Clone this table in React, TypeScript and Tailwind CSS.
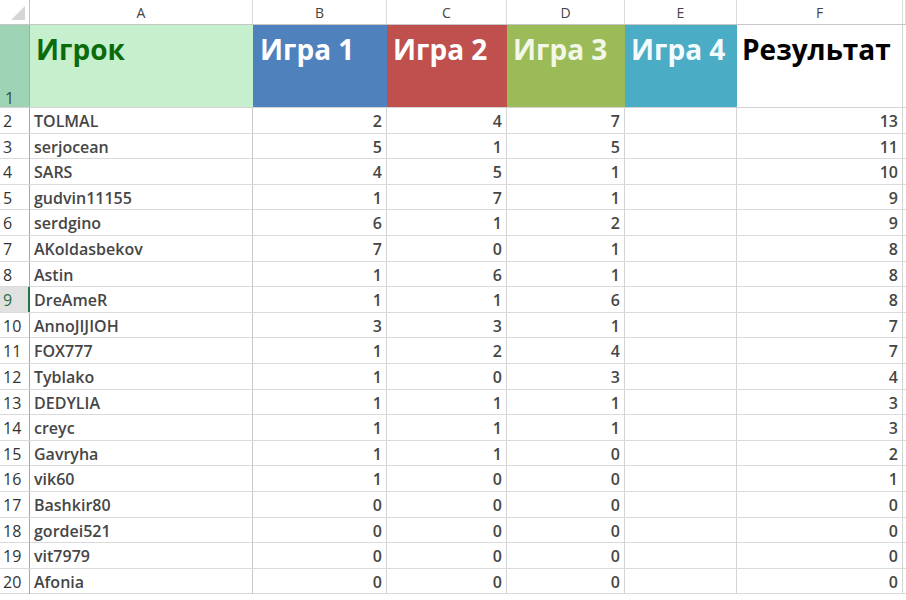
const rows: [string, number, number, number, number][] = [
  ["TOLMAL", 2, 4, 7, 13],
  ["serjocean", 5, 1, 5, 11],
  ["SARS", 4, 5, 1, 10],
  ["gudvin11155", 1, 7, 1, 9],
  ["serdgino", 6, 1, 2, 9],
  ["AKoldasbekov", 7, 0, 1, 8],
  ["Astin", 1, 6, 1, 8],
  ["DreAmeR", 1, 1, 6, 8],
  ["AnnoJIJIOH", 3, 3, 1, 7],
  ["FOX777", 1, 2, 4, 7],
  ["Tyblako", 1, 0, 3, 4],
  ["DEDYLIA", 1, 1, 1, 3],
  ["creyc", 1, 1, 1, 3],
  ["Gavryha", 1, 1, 0, 2],
  ["vik60", 1, 0, 0, 1],
  ["Bashkir80", 0, 0, 0, 0],
  ["gordei521", 0, 0, 0, 0],
  ["vit7979", 0, 0, 0, 0],
  ["Afonia", 0, 0, 0, 0],
];

const cols = "grid grid-cols-[30px_223px_134px_120px_118px_112px_166px_1fr]";
const letters = ["A", "B", "C", "D", "E", "F", ""];

export default function App() {
  return (
    <div className="w-[906px] h-[600px] overflow-hidden bg-white font-['Open_Sans',sans-serif] text-[#262626]">
      {/* column letters */}
      <div className={`${cols} h-[25px] border-b border-[#c6c6c6]`}>
        <div className="relative border-r border-[#c6c6c6]">
          <div className="absolute right-[4px] bottom-[4px] w-0 h-0 border-l-[14px] border-l-transparent border-b-[14px] border-b-[#d6d6d6]" />
        </div>
        {letters.map((l, i) => (
          <div
            key={i}
            className="flex items-center justify-center border-r border-[#dcdcdc] text-[14px] text-[#444]"
          >
            {l}
          </div>
        ))}
      </div>

      {/* header row */}
      <div className={`${cols} h-[83px] border-b border-[#d4d4d4] text-[28px] font-bold leading-none`}>
        <div className="flex items-end justify-start pl-[5px] pb-[1px] bg-[#9fd3b5] border-r border-[#a8a8a8] text-[16px] font-normal text-[#2f4f3a]">
          1
        </div>
        <div className="bg-[#c6efce] pl-[6px] pt-[10px] text-[#0b6b0b]">Игрок</div>
        <div className="bg-[#4f81bd] pl-[7px] pt-[10px] text-white">Игра 1</div>
        <div className="bg-[#c0504d] pl-[6px] pt-[10px] text-white">Игра 2</div>
        <div className="bg-[#9bbb59] pl-[6px] pt-[10px] text-[#f3f7e8]">Игра 3</div>
        <div className="bg-[#4bacc6] pl-[6px] pt-[10px] text-[#f4fbfd]">Игра 4</div>
        <div className="border-r border-[#d4d4d4] pl-[5px] pt-[10px] text-black">Результат</div>
        <div />
      </div>

      {/* data rows */}
      {rows.map((r, i) => {
        const n = i + 2;
        const active = n === 9;
        return (
          <div key={n} className={`${cols} h-[25.6px] border-b border-[#dadada] text-[16px] font-semibold text-[#464646]`}>
            <div
              className={`flex items-center pl-[3px] pt-[1px] font-normal border-r ${
                active
                  ? "bg-[#e1e1e1] text-[#217346] border-r-2 border-r-[#217346]"
                  : "text-[#333] border-[#a8a8a8]"
              }`}
            >
              {n}
            </div>
            <div className="flex items-center pl-[4px] pt-[1px] border-r border-[#c8c8c8]">{r[0]}</div>
            <div className="flex items-center justify-end pr-[4px] pt-[1px] border-r border-[#d4d4d4]">{r[1]}</div>
            <div className="flex items-center justify-end pr-[4px] pt-[1px] border-r border-[#d4d4d4]">{r[2]}</div>
            <div className="flex items-center justify-end pr-[4px] pt-[1px] border-r border-[#d4d4d4]">{r[3]}</div>
            <div className="border-r border-[#d4d4d4]" />
            <div className="flex items-center justify-end pr-[4px] pt-[1px] border-r border-[#d4d4d4]">{r[4]}</div>
            <div />
          </div>
        );
      })}
    </div>
  );
}
